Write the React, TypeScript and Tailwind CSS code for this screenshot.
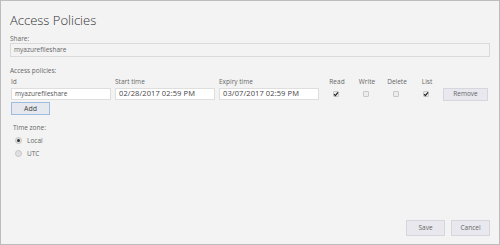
const label = "text-[6.5px] leading-[9px] text-[#666]";

function Check({ checked }: { checked: boolean }) {
  return (
    <div className="flex h-full items-center justify-center">
      <div className="relative h-[6px] w-[6px] rounded-[1px] border border-[#c8c8c8] bg-[#ececec]">
        {checked && (
          <svg viewBox="0 0 6 6" className="absolute -left-[1px] -top-[1px] h-[6px] w-[6px]">
            <path d="M1 3.2 L2.4 4.6 L5 1.4" stroke="#222" strokeWidth="1.2" fill="none" />
          </svg>
        )}
      </div>
    </div>
  );
}

function Radio({ checked, text }: { checked: boolean; text: string }) {
  return (
    <div className="flex h-[13px] items-center">
      <div className="ml-[2px] flex h-[7px] w-[7px] items-center justify-center rounded-full border border-[#c4c4c4] bg-[#e0e0e0]">
        {checked && <div className="h-[3px] w-[3px] rounded-full bg-[#333]" />}
      </div>
      <span className={`${label} ml-[5px] text-[#555]`}>{text}</span>
    </div>
  );
}

export default function App() {
  return (
    <div
      className="flex h-[245px] w-[500px] flex-col border border-[#bdbdbd] bg-[#f3f3f3] pl-[9px] pr-[9px] pt-[11px] pb-[8px]"
      style={{ fontFamily: '"Open Sans", "Noto Sans", sans-serif' }}
    >
      <h1 className="text-[13px] font-light leading-[17px] text-[#333]">Access Policies</h1>

      <div className={`${label} mt-[5px]`}>Share:</div>
      <div className="flex h-[14px] items-center border border-[#dadada] bg-[#f3f3f3] pl-[3px] text-[6.5px] text-[#666]">
        myazurefileshare
      </div>

      <div className={`${label} mt-[9px]`}>Access policies:</div>

      <div className="ml-[1px] mt-[2px] grid grid-cols-[100px_100px_100px_26px_26px_26px_26px_45px] gap-x-[4px]">
        <div className={label}>Id</div>
        <div className={label}>Start time</div>
        <div className={label}>Expiry time</div>
        <div className={`${label} pl-[2px] text-center`}>Read</div>
        <div className={`${label} pl-[2px] text-center`}>Write</div>
        <div className={`${label} pl-[2px] text-center`}>Delete</div>
        <div className={`${label} pl-[2px] text-center`}>List</div>
        <div />

        <div className="mt-[2px] flex h-[12px] items-center border border-[#dedede] bg-white pl-[3px] text-[6.5px] text-[#555]">
          myazurefileshare
        </div>
        <div className="mt-[2px] flex h-[12px] items-center border border-[#dedede] bg-white pl-[3px] text-[7.5px] tracking-[0.1px] text-[#444]">
          02/28/2017 02:59 PM
        </div>
        <div className="mt-[2px] flex h-[12px] items-center border border-[#dedede] bg-white pl-[3px] text-[7.5px] tracking-[0.1px] text-[#444]">
          03/07/2017 02:59 PM
        </div>
        <div className="mt-[2px] h-[12px]"><Check checked /></div>
        <div className="mt-[2px] h-[12px]"><Check checked={false} /></div>
        <div className="mt-[2px] h-[12px]"><Check checked={false} /></div>
        <div className="mt-[2px] h-[12px]"><Check checked /></div>
        <button className="mt-[2px] h-[13px] border border-[#d6d6de] bg-[#e8e8ee] text-[6.5px] leading-none text-[#666]">
          Remove
        </button>
      </div>

      <button className="ml-[1px] mt-[1px] h-[13px] w-[39px] border border-[#9fbbdd] bg-[#e6e8f0] text-[7px] leading-none text-[#444]">
        Add
      </button>

      <div className={`${label} ml-[3px] mt-[8px]`}>Time zone:</div>
      <div className="ml-[3px] mt-[2px] flex flex-col">
        <Radio checked text="Local" />
        <Radio checked={false} text="UTC" />
      </div>

      <div className="mt-auto flex justify-end gap-[6px]">
        <button className="h-[16px] w-[39px] border border-[#d6d6de] bg-[#e8e8ee] text-[6.5px] leading-none text-[#666]">
          Save
        </button>
        <button className="h-[16px] w-[39px] border border-[#d6d6de] bg-[#e8e8ee] text-[6.5px] leading-none text-[#666]">
          Cancel
        </button>
      </div>
    </div>
  );
}
